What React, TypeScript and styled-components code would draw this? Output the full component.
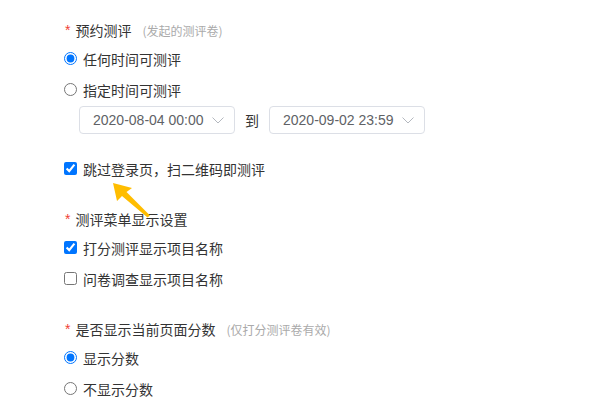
import React from "react";
import styled, { createGlobalStyle } from "styled-components";

const GlobalStyle = createGlobalStyle`
  body {
    margin: 0;
    background: #fff;
    font-family: "Noto Sans CJK SC", "Noto Sans", sans-serif;
    color: #333;
  }
`;

const App = () => {
  return (
    <Page>
      <GlobalStyle />
      <Section>
        <Label>
          <Star>*</Star>预约测评<Hint>(发起的测评卷)</Hint>
        </Label>
        <Option>
          <input type="radio" name="time" defaultChecked />
          任何时间可测评
        </Option>
        <Option>
          <input type="radio" name="time" />
          指定时间可测评
        </Option>
        <DateRow>
          <Select>
            2020-08-04 00:00
            <Chevron />
          </Select>
          <To>到</To>
          <Select>
            2020-09-02 23:59
            <Chevron />
          </Select>
        </DateRow>
        <SkipRow>
          <input type="checkbox" defaultChecked />
          跳过登录页，扫二维码即测评
          <Arrow />
        </SkipRow>
      </Section>
      <Section>
        <Label>
          <Star>*</Star>测评菜单显示设置
        </Label>
        <Option>
          <input type="checkbox" defaultChecked />
          打分测评显示项目名称
        </Option>
        <Option>
          <input type="checkbox" />
          问卷调查显示项目名称
        </Option>
      </Section>
      <Section>
        <Label>
          <Star>*</Star>是否显示当前页面分数<Hint>(仅打分测评卷有效)</Hint>
        </Label>
        <Option>
          <input type="radio" name="score" defaultChecked />
          显示分数
        </Option>
        <Option>
          <input type="radio" name="score" />
          不显示分数
        </Option>
      </Section>
    </Page>
  );
};

export default App;

const Chevron = () => (
  <ChevronSvg viewBox="0 0 12 7" width="12" height="7">
    <path d="M0.5 0.5 L6 6 L11.5 0.5" fill="none" stroke="#b4b8bf" strokeWidth="1" />
  </ChevronSvg>
);

const Arrow = () => (
  <ArrowSvg viewBox="0 0 50 45" width="50" height="45">
    <polygon
      points="3,3 22,8 16.5,12 40,35.5 37.5,37.5 12,16 7,21"
      fill="#ffbd00"
    />
  </ArrowSvg>
);

const Page = styled.div`
  width: 600px;
  height: 400px;
  overflow: hidden;
  padding: 20px 0 0 64px;
  box-sizing: border-box;
  display: flex;
  flex-direction: column;
  gap: 25px;
`;

const Section = styled.div`
  display: flex;
  flex-direction: column;
`;

const Label = styled.div`
  display: flex;
  align-items: center;
  height: 20px;
  margin-bottom: 3px;
  font-size: 14px;
  color: #333;
`;

const Star = styled.span`
  color: #f04134;
  margin: 0 5px 0 1px;
  font-family: "Liberation Sans", sans-serif;
`;

const Hint = styled.span`
  font-size: 12px;
  color: #aaa;
  margin-left: 11px;
`;

const Option = styled.label`
  display: flex;
  align-items: center;
  height: 31px;
  font-size: 14px;
  color: #333;

  input {
    width: 13px;
    height: 13px;
    margin: 0 6px 0 0;
  }
`;

const SkipRow = styled(Option)`
  position: relative;
  margin-top: 19px;
`;

const DateRow = styled.div`
  display: flex;
  align-items: center;
  margin: 1px 0 0 15px;
  gap: 10px;
`;

const Select = styled.div`
  width: 156px;
  height: 28px;
  box-sizing: border-box;
  border: 1px solid #dcdfe6;
  border-radius: 4px;
  display: flex;
  align-items: center;
  justify-content: space-between;
  padding: 0 10px 0 13px;
  font-family: "Liberation Sans", Arial, sans-serif;
  font-size: 14px;
  color: #606266;
`;

const ChevronSvg = styled.svg`
  display: block;
`;

const To = styled.span`
  font-size: 14px;
  color: #333;
`;

const ArrowSvg = styled.svg`
  position: absolute;
  left: 46px;
  top: 27px;
  pointer-events: none;
`;
